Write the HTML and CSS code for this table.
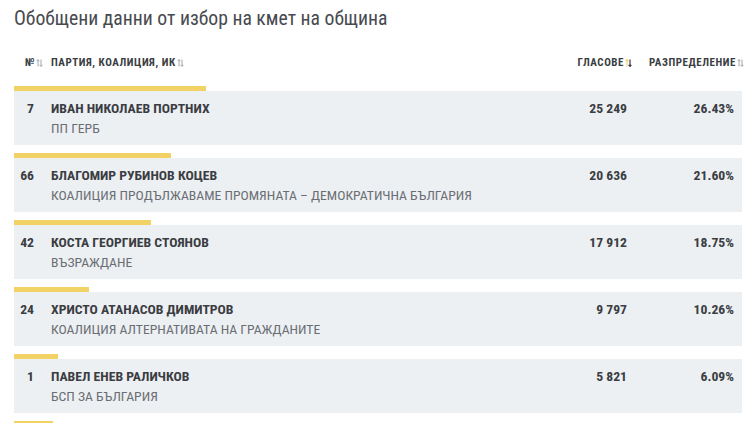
FILE: index.html
```html
<!DOCTYPE html>
<html lang="bg">
<head>
<meta charset="utf-8">
<link rel="stylesheet" href="styles.css">
</head>
<body>
<h1 class="title">Обобщени данни от избор на кмет на община</h1>
<div class="table">
  <div class="thead">
    <div class="h-num">№<svg class="sort" width="7" height="8" viewBox="0 0 7 8"><path d="M2 7.5V0.8M0.6 2.2L2 0.6L3.4 2.2M5 0.5V7.2M3.6 5.8L5 7.4L6.4 5.8" stroke="#9aa0a6" stroke-width="0.9" fill="none"/></svg></div>
    <div class="h-name">ПАРТИЯ, КОАЛИЦИЯ, ИК<svg class="sort" width="7" height="8" viewBox="0 0 7 8"><path d="M2 7.5V0.8M0.6 2.2L2 0.6L3.4 2.2M5 0.5V7.2M3.6 5.8L5 7.4L6.4 5.8" stroke="#9aa0a6" stroke-width="0.9" fill="none"/></svg></div>
    <div class="h-votes">ГЛАСОВЕ<svg class="sort" width="7" height="8" viewBox="0 0 7 8"><path d="M2 7.5V0.8M0.6 2.2L2 0.6L3.4 2.2" stroke="#f1d36a" stroke-width="1.1" fill="none"/><path d="M5 0.5V7.2M3.6 5.8L5 7.4L6.4 5.8" stroke="#3a3d42" stroke-width="1.2" fill="none"/></svg></div>
    <div class="h-pct">РАЗПРЕДЕЛЕНИЕ<svg class="sort" width="7" height="8" viewBox="0 0 7 8"><path d="M2 7.5V0.8M0.6 2.2L2 0.6L3.4 2.2M5 0.5V7.2M3.6 5.8L5 7.4L6.4 5.8" stroke="#9aa0a6" stroke-width="0.9" fill="none"/></svg></div>
  </div>

  <div class="row">
    <div class="bar" style="width:26.43%"></div>
    <div class="cells">
      <div class="num">7</div>
      <div class="name"><div class="cand">ИВАН НИКОЛАЕВ ПОРТНИХ</div><div class="party">ПП ГЕРБ</div></div>
      <div class="votes">25 249</div>
      <div class="pct">26.43%</div>
    </div>
  </div>

  <div class="row">
    <div class="bar" style="width:21.60%"></div>
    <div class="cells">
      <div class="num">66</div>
      <div class="name"><div class="cand">БЛАГОМИР РУБИНОВ КОЦЕВ</div><div class="party">КОАЛИЦИЯ ПРОДЪЛЖАВАМЕ ПРОМЯНАТА – ДЕМОКРАТИЧНА БЪЛГАРИЯ</div></div>
      <div class="votes">20 636</div>
      <div class="pct">21.60%</div>
    </div>
  </div>

  <div class="row">
    <div class="bar" style="width:18.75%"></div>
    <div class="cells">
      <div class="num">42</div>
      <div class="name"><div class="cand">КОСТА ГЕОРГИЕВ СТОЯНОВ</div><div class="party">ВЪЗРАЖДАНЕ</div></div>
      <div class="votes">17 912</div>
      <div class="pct">18.75%</div>
    </div>
  </div>

  <div class="row">
    <div class="bar" style="width:10.26%"></div>
    <div class="cells">
      <div class="num">24</div>
      <div class="name"><div class="cand">ХРИСТО АТАНАСОВ ДИМИТРОВ</div><div class="party">КОАЛИЦИЯ АЛТЕРНАТИВАТА НА ГРАЖДАНИТЕ</div></div>
      <div class="votes">9 797</div>
      <div class="pct">10.26%</div>
    </div>
  </div>

  <div class="row">
    <div class="bar" style="width:6.09%"></div>
    <div class="cells">
      <div class="num">1</div>
      <div class="name"><div class="cand">ПАВЕЛ ЕНЕВ РАЛИЧКОВ</div><div class="party">БСП ЗА БЪЛГАРИЯ</div></div>
      <div class="votes">5 821</div>
      <div class="pct">6.09%</div>
    </div>
  </div>

  <div class="row">
    <div class="bar" style="width:5.4%"></div>
    <div class="cells">
      <div class="num">&nbsp;</div>
      <div class="name"><div class="cand">&nbsp;</div><div class="party">&nbsp;</div></div>
      <div class="votes"></div>
      <div class="pct"></div>
    </div>
  </div>
</div>
</body>
</html>
```

FILE: styles.css
```css
* { box-sizing: border-box; }
html, body { margin: 0; padding: 0; background: #fff; }
body {
  font-family: "Roboto Condensed", "Liberation Sans Narrow", "DejaVu Sans Condensed", Roboto, sans-serif;
  color: #3a3d42;
  overflow: hidden;
  height: 423px;
}
.title {
  margin: 0;
  padding: 7px 0 0 14px;
  font-size: 19.7px;
  font-weight: 400;
  line-height: 24px;
  color: #474a4f;
}
.table {
  margin: 26px 10px 0 14px;
}
.thead {
  display: grid;
  grid-template-columns: 37px 1fr 90px 105px;
  font-size: 11px;
  font-weight: 700;
  letter-spacing: 0.55px;
  line-height: 12px;
  height: 29px;
  color: #3a3d42;
}
.thead > div { display: flex; align-items: center; height: 12px; }
.h-num { padding-left: 11px; }
.h-votes, .h-pct { justify-content: flex-end; }
.h-votes { padding-right: 5px; }
.h-pct { margin-right: -2px; }
.sort { margin-left: 1px; flex: none; }
.row { margin-bottom: 8px; }
.bar { height: 5px; background: #f2d264; }
.cells {
  display: grid;
  grid-template-columns: 37px 1fr 90px 105px;
  background: #edf0f3;
  height: 54px;
  padding-top: 8px;
}
.num, .cand, .votes, .pct {
  font-size: 13.7px;
  font-weight: 700;
  line-height: 18px;
  color: #3a3d42;
}
.num { text-align: right; padding-right: 17px; }
.votes { text-align: right; padding-right: 10px; }
.pct { text-align: right; padding-right: 8px; }
.party {
  font-size: 13.7px;
  font-weight: 400;
  line-height: 22px;
  color: #6a6e74;
}
```
